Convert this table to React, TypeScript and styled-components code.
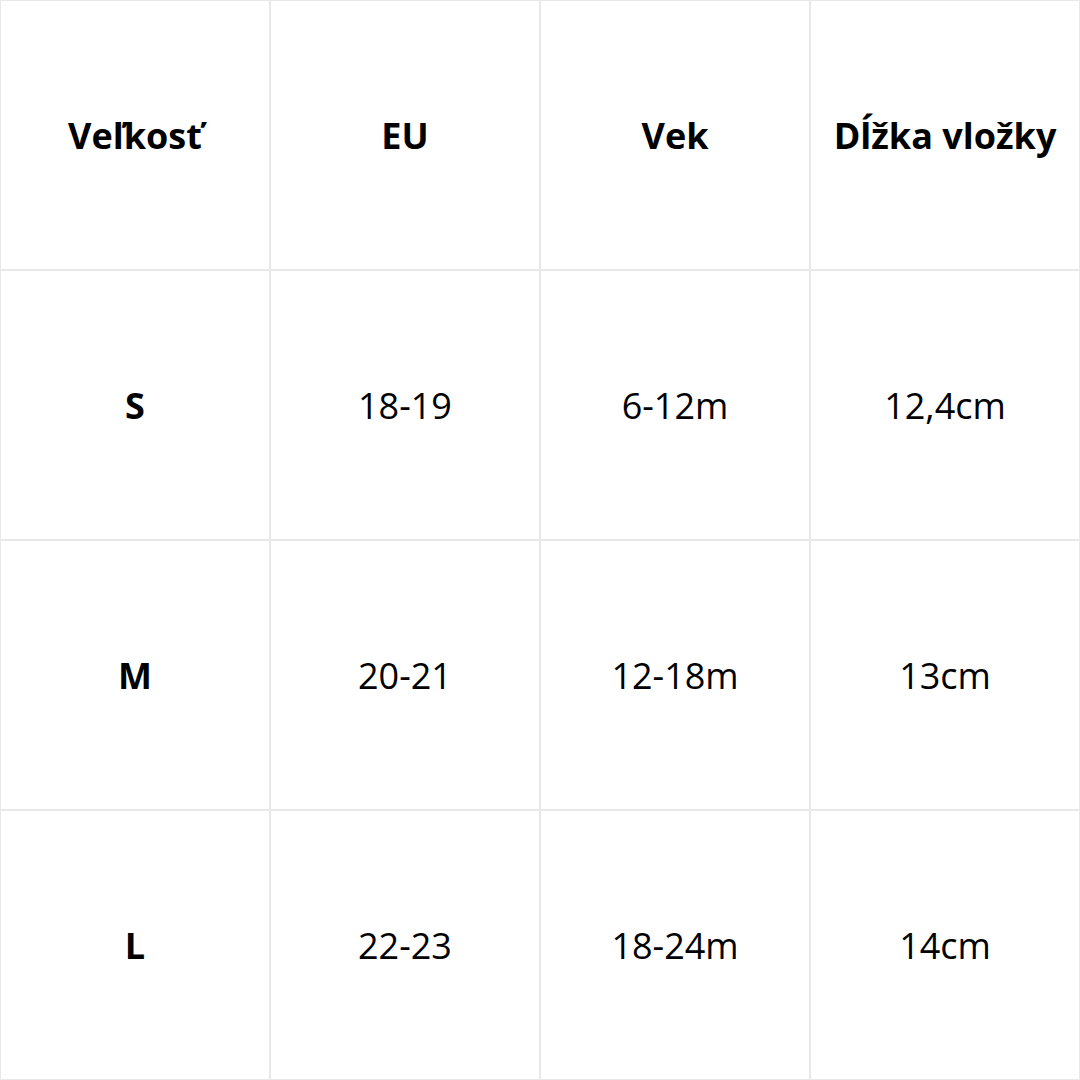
import React from "react";
import styled, { createGlobalStyle } from "styled-components";

const GlobalStyle = createGlobalStyle`
  html, body {
    margin: 0;
    padding: 0;
    background: #ffffff;
  }
`;

const Table = styled.div`
  width: 1080px;
  height: 1080px;
  box-sizing: border-box;
  padding: 1px;
  background: #e8e8e8;
  display: grid;
  grid-template-columns: repeat(4, 1fr);
  grid-template-rows: repeat(4, 1fr);
  gap: 2px;
  font-family: "Open Sans", "Noto Sans", sans-serif;
  color: #000000;
`;

const Cell = styled.div<{ $bold?: boolean }>`
  background: #ffffff;
  display: flex;
  align-items: center;
  justify-content: center;
  font-size: 36px;
  font-weight: ${(p) => (p.$bold ? 700 : 400)};
  white-space: nowrap;
`;

const header = ["Veľkosť", "EU", "Vek", "Dĺžka vložky"];
const rows = [
  ["S", "18-19", "6-12m", "12,4cm"],
  ["M", "20-21", "12-18m", "13cm"],
  ["L", "22-23", "18-24m", "14cm"],
];

export default function App() {
  return (
    <>
      <GlobalStyle />
      <Table>
        {header.map((h) => (
          <Cell key={h} $bold>
            {h}
          </Cell>
        ))}
        {rows.map((r) =>
          r.map((v, i) => (
            <Cell key={r[0] + i} $bold={i === 0}>
              {v}
            </Cell>
          ))
        )}
      </Table>
    </>
  );
}
